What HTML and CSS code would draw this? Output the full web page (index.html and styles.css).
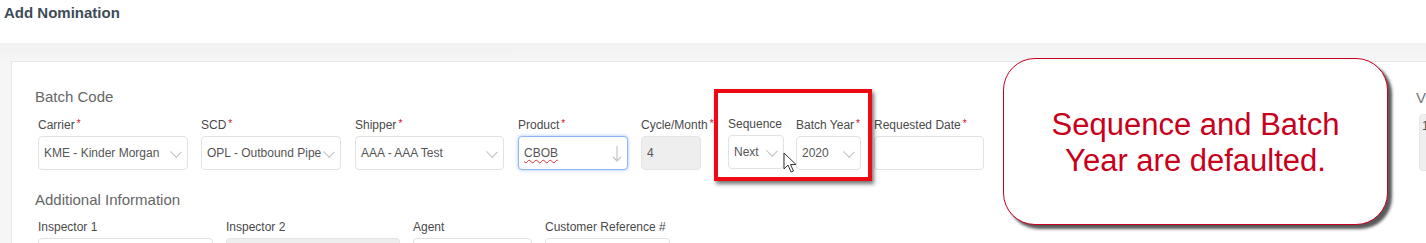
FILE: index.html
```html
<!DOCTYPE html>
<html lang="en">
<head>
    <meta charset="UTF-8">
    <title>Add Nomination</title>
    <link rel="stylesheet" href="styles.css">
</head>
<body>
    <div class="page-header">Add Nomination</div>

    <div class="content">
        <div class="card">
            <div class="card-main">
                <!-- Batch Code -->
                <div class="section-title">Batch Code</div>
                <div class="field-row">
                    <div class="field w-carrier">
                        <label>Carrier<span class="req">*</span></label>
                        <div class="input select">KME - Kinder Morgan<span class="chev"></span></div>
                    </div>
                    <div class="field w-scd">
                        <label>SCD<span class="req">*</span></label>
                        <div class="input select">OPL - Outbound Pipe<span class="chev"></span></div>
                    </div>
                    <div class="field w-shipper">
                        <label>Shipper<span class="req">*</span></label>
                        <div class="input select">AAA - AAA Test<span class="chev"></span></div>
                    </div>
                    <div class="field w-product">
                        <label>Product<span class="req">*</span></label>
                        <div class="input focused"><span class="spell">CBOB</span>
                            <svg class="down" width="10" height="18" viewBox="0 0 10 18"><path d="M5 1V16M1 12L5 16L9 12" fill="none" stroke="#c4c4c4" stroke-width="1.2"/></svg>
                        </div>
                    </div>
                    <div class="field w-cycle">
                        <label>Cycle/Month<span class="req">*</span></label>
                        <div class="input disabled">4</div>
                    </div>
                    <div class="field w-seq">
                        <label>Sequence</label>
                        <div class="input select">Next<span class="chev"></span></div>
                    </div>
                    <div class="field w-year">
                        <label>Batch Year<span class="req">*</span></label>
                        <div class="input select">2020<span class="chev"></span></div>
                    </div>
                    <div class="field w-date">
                        <label>Requested Date<span class="req">*</span></label>
                        <div class="input"></div>
                    </div>
                </div>

                <!-- Additional Information -->
                <div class="section-title second">Additional Information</div>
                <div class="field-row">
                    <div class="field w-insp1">
                        <label>Inspector 1</label>
                        <div class="input"></div>
                    </div>
                    <div class="field w-insp2">
                        <label>Inspector 2</label>
                        <div class="input disabled"></div>
                    </div>
                    <div class="field w-agent">
                        <label>Agent</label>
                        <div class="input"></div>
                    </div>
                    <div class="field w-custref">
                        <label>Customer Reference #</label>
                        <div class="input"></div>
                    </div>
                </div>
            </div>

            <div class="card-side">
                <div class="side-label">V</div>
                <div class="side-input">1</div>
            </div>
        </div>
    </div>

    <!-- Tutorial overlays -->
    <div class="highlight-box"></div>
    <div class="callout">Sequence and Batch<br>Year are defaulted.</div>
    <svg class="cursor" width="14" height="22" viewBox="0 0 14 22">
        <path d="M1 1L1 17L5 13L8 20L10.5 19L7.5 12.5L13 12.5Z" fill="#fff" stroke="#333" stroke-width="1" stroke-linejoin="round"/>
    </svg>
</body>
</html>
```

FILE: styles.css
```css
body { margin: 0; font-family: "Liberation Sans", Arial, sans-serif; color: #444; background-color: #fff; width: 1426px; height: 243px; overflow: hidden; position: relative; }

.page-header { height: 43px; padding-left: 4px; box-sizing: border-box; padding-top: 4px; font-size: 15px; font-weight: bold; color: #3e4c56; }

.content { background: linear-gradient(#f1f1f1, #f6f6f6 18px); padding: 18px 0 0 11px; height: 200px; box-sizing: border-box; overflow: hidden; }
.card { display: flex; width: 1430px; height: 182px; background-color: #fff; border: 1px solid #e6e6e6; border-bottom: none; box-sizing: border-box; overflow: hidden; }
.card-main { flex: 1; padding: 26px 0 0 23px; }
.card-side { width: 24px; padding-top: 27px; }

.section-title { font-size: 15px; line-height: 18px; color: #666; }
.section-title.second { margin-top: 21px; }

.field-row { display: flex; margin-top: 11px; }
.field { margin-left: 3px; }
.field label { display: block; font-size: 12px; line-height: 14px; color: #4a4a4a; white-space: nowrap; }
.req { color: #d0102a; font-size: 10px; margin-left: 2px; vertical-align: 2px; }

.input { position: relative; margin-top: 4px; height: 34px; box-sizing: border-box; border: 1px solid #e2e2e2; border-radius: 4px; padding-left: 5px; font-size: 12px; line-height: 32px; color: #555; white-space: nowrap; overflow: hidden; background-color: #fff; }
.input.disabled { background-color: #eee; border-color: #e4e4e4; }
.input.focused { border-color: #8fb6f0; box-shadow: 0 0 3px 1px #c6dbfb; }
.select { padding-right: 20px; }
.chev { position: absolute; right: 7px; top: 11px; width: 7px; height: 7px; border-right: 1px solid #c2c2c2; border-bottom: 1px solid #c2c2c2; transform: rotate(45deg) scaleX(1.1); background-color: #fff; }
.spell { text-decoration: underline wavy #e0303a; text-decoration-thickness: 1px; text-underline-offset: 2px; }
.down { position: absolute; right: 5px; top: 8px; }

.w-carrier { width: 150px; }
.w-scd { width: 140px; margin-left: 13px; }
.w-shipper { width: 149px; margin-left: 14px; }
.w-product { width: 110px; margin-left: 14px; }
.w-cycle { width: 60px; margin-left: 13px; }
.w-seq { width: 56px; margin-left: 27px; }
.w-year { width: 65px; margin-left: 12px; }
.w-date { width: 110px; margin-left: 13px; }
.w-insp1 { width: 175px; }
.w-insp2 { width: 174px; margin-left: 13px; }
.w-agent { width: 119px; margin-left: 13px; }
.w-custref { width: 125px; margin-left: 13px; }

.side-label { font-size: 15px; color: #777; line-height: 18px; }
.side-input { margin: 7px 0 0 3px; height: 57px; background-color: #efefef; border: 1px solid #e6e6e6; border-radius: 4px 0 0 4px; font-size: 12px; padding: 4px 0 0 2px; color: #555; box-sizing: border-box; }

.highlight-box { position: absolute; left: 714px; top: 89px; width: 158px; height: 92px; box-sizing: border-box; border: 4px solid #ee0a14; box-shadow: 2px 3px 4px rgba(0, 0, 0, 0.55); }

.callout { position: absolute; left: 1003px; top: 58px; width: 385px; height: 167px; box-sizing: border-box; border: 1.5px solid #c8001c; border-radius: 32px; background-color: #fff; box-shadow: 4px 4px 3px rgba(60, 60, 60, 0.85); color: #c8001c; font-size: 31px; line-height: 36px; text-align: center; padding-top: 48px; }

.cursor { position: absolute; left: 783px; top: 152px; }
```
